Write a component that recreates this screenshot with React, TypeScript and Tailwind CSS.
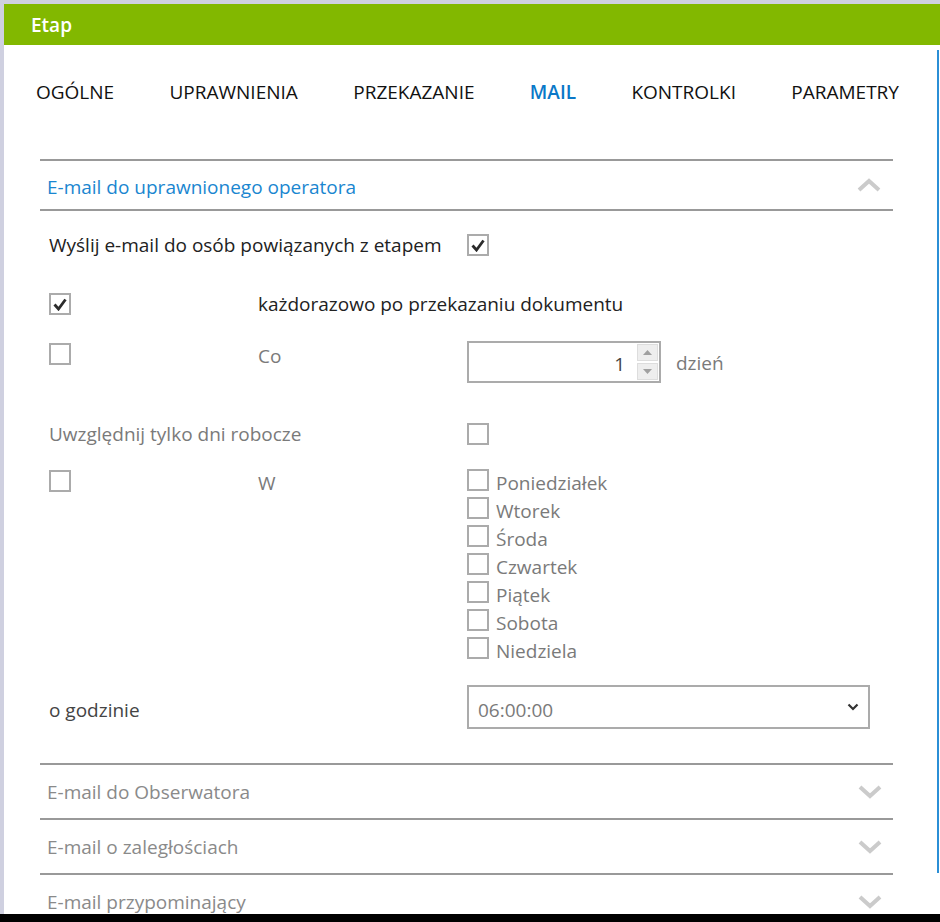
import { useState } from 'react'

const days = ['Poniedziałek', 'Wtorek', 'Środa', 'Czwartek', 'Piątek', 'Sobota', 'Niedziela']

const tabs = ['OGÓLNE', 'UPRAWNIENIA', 'PRZEKAZANIE', 'MAIL', 'KONTROLKI', 'PARAMETRY']

const Check = ({ checked }: { checked?: boolean }) => (
  <div className="w-[22px] h-[22px] border-2 border-[#ababab] bg-white flex items-center justify-center shrink-0">
    {checked && (
      <svg width="14" height="13" viewBox="0 0 14 13">
        <polyline points="1.5,6.5 5.5,11 12.5,1.5" fill="none" stroke="#2b2b2b" strokeWidth="2.8" />
      </svg>
    )}
  </div>
)

const Chevron = ({ up }: { up?: boolean }) => (
  <svg width="24" height="16" viewBox="0 0 24 16">
    <polyline
      points={up ? '2,13 12,4 22,13' : '2,3 12,12 22,3'}
      fill="none"
      stroke="#cbcbcb"
      strokeWidth="4"
    />
  </svg>
)

const CollapsedSection = ({ title }: { title: string }) => (
  <div className="border-t-2 border-[#999999] h-[55px] flex items-center justify-between pl-[7px] pr-[11px]">
    <span className="text-[#8a8a8a]">{title}</span>
    <Chevron />
  </div>
)

const App = () => {
  const [hour] = useState('06:00:00')

  return (
    <div className="w-[940px] h-[922px] bg-[#cfd0e0] pl-[4px] pt-[4px] flex flex-col overflow-hidden font-['Open_Sans',sans-serif] text-[19px] leading-[26px]">
      {/* Header */}
      <div className="h-[41px] bg-[#82b800] flex items-center pl-[27px] shrink-0">
        <span className="text-white text-[19px] font-semibold">Etap</span>
      </div>

      <div className="relative flex-1 bg-white overflow-hidden">
        <div className="absolute right-[1px] top-[5px] h-[823px] w-[2px] bg-[#2b8fd6]" />

        {/* Tabs */}
        <div className="flex justify-between w-[863px] ml-[32px] pt-[34px] h-[114px] text-[#111] text-[19px]">
          {tabs.map(t => (
            <span key={t} className={t === 'MAIL' ? 'text-[#0a78c8] font-semibold' : ''}>
              {t}
            </span>
          ))}
        </div>

        {/* Accordion */}
        <div className="ml-[36px] w-[853px]">
          <div className="border-t-2 border-b-2 border-[#999999] h-[52px] flex items-center justify-between pl-[7px] pr-[12px]">
            <span className="text-[#1a86d0] mt-[3px]">E-mail do uprawnionego operatora</span>
            <Chevron up />
          </div>

          <div className="pl-[9px] pr-[23px] pt-[21px] pb-[34px] flex flex-col">
            <div className="grid grid-cols-[418px_1fr] items-center h-[22px]">
              <span className="text-[#222]">Wyślij e-mail do osób powiązanych z etapem</span>
              <Check checked />
            </div>

            <div className="grid grid-cols-[209px_209px_1fr] items-center h-[22px] mt-[37px]">
              <Check checked />
              <span className="text-[#222] col-span-2">każdorazowo po przekazaniu dokumentu</span>
            </div>

            <div className="grid grid-cols-[209px_209px_1fr] items-start mt-[28px]">
              <div className="pt-[2px]"><Check /></div>
              <span className="text-[#7a7a7a] pt-[2px]">Co</span>
              <div className="flex items-center">
                <div className="w-[194px] h-[42px] border-2 border-[#ababab] flex items-center justify-end">
                  <span className="text-[#444] mr-[12px] mt-[4px]">1</span>
                  <div className="flex flex-col gap-[2px] mr-[1px]">
                    <div className="w-[21px] h-[17px] bg-[#eeeeee] border border-[#dddddd] flex items-center justify-center">
                      <svg width="9" height="5" viewBox="0 0 9 5"><polygon points="0,5 4.5,0 9,5" fill="#a0a0a0" /></svg>
                    </div>
                    <div className="w-[21px] h-[17px] bg-[#eeeeee] border border-[#dddddd] flex items-center justify-center">
                      <svg width="9" height="5" viewBox="0 0 9 5"><polygon points="0,0 4.5,5 9,0" fill="#a0a0a0" /></svg>
                    </div>
                  </div>
                </div>
                <span className="text-[#7a7a7a] ml-[15px] mt-[2px]">dzień</span>
              </div>
            </div>

            <div className="grid grid-cols-[418px_1fr] items-center h-[22px] mt-[38px]">
              <span className="text-[#7a7a7a]">Uwzględnij tylko dni robocze</span>
              <Check />
            </div>

            <div className="grid grid-cols-[209px_209px_1fr] items-start mt-[26px]">
              <div className="pt-[1px]"><Check /></div>
              <span className="text-[#7a7a7a] pt-[1px]">W</span>
              <div className="flex flex-col">
                {days.map(d => (
                  <div key={d} className="flex items-start h-[28px] gap-[7px]">
                    <Check />
                    <span className="text-[#7a7a7a] pt-[1px]">{d}</span>
                  </div>
                ))}
              </div>
            </div>

            <div className="grid grid-cols-[418px_1fr] items-center mt-[20px]">
              <span className="text-[#444] mt-[5px]">o godzinie</span>
              <div className="w-[403px] h-[44px] border-2 border-[#ababab] flex items-center justify-between pl-[9px] pr-[9px]">
                <span className="text-[#7a7a7a] mt-[5px]">{hour}</span>
                <svg width="12" height="8" viewBox="0 0 12 8">
                  <polyline points="1.5,1.5 6,6 10.5,1.5" fill="none" stroke="#333" strokeWidth="2.2" />
                </svg>
              </div>
            </div>
          </div>

          <CollapsedSection title="E-mail do Obserwatora" />
          <CollapsedSection title="E-mail o zaległościach" />
          <CollapsedSection title="E-mail przypominający" />
        </div>
      </div>
      <div className="h-[8px] bg-black -ml-[4px] shrink-0" />
    </div>
  )
}

export default App
